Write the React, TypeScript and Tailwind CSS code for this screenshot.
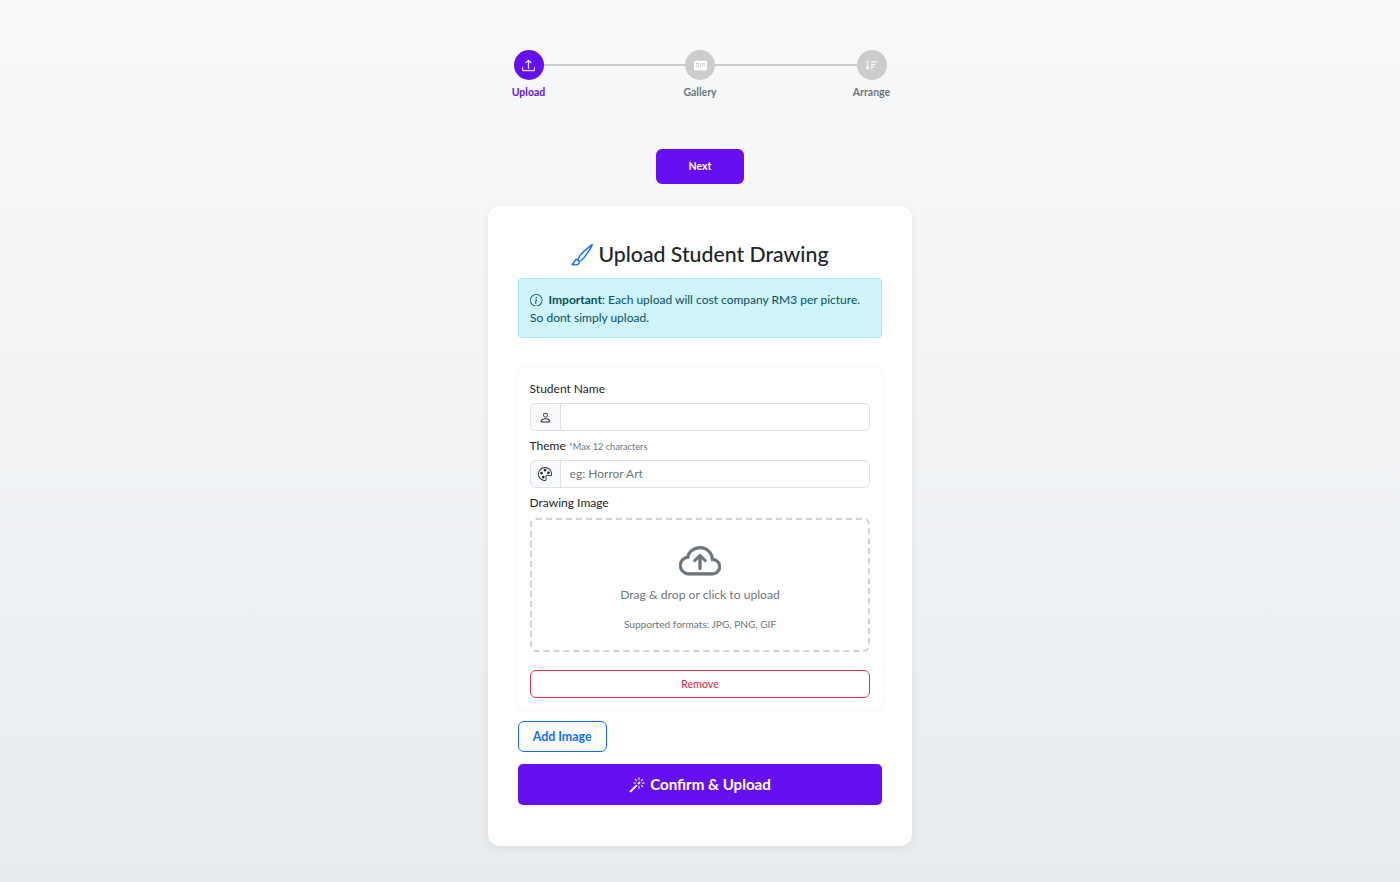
import React from "react";
import { BsUpload, BsPostcardFill, BsSortDown, BsBrush, BsInfoCircle, BsPerson, BsPalette, BsCloudArrowUp, BsMagic } from "react-icons/bs";

function Step({ label, active, children }: { label: string; active?: boolean; children: React.ReactNode }) {
  return (
    <div className="flex w-[60px] flex-col items-center">
      <div className={active ? "z-10 flex h-[30px] w-[30px] items-center justify-center rounded-full bg-[#6610f2] text-[13px] text-white" : "z-10 flex h-[30px] w-[30px] items-center justify-center rounded-full bg-[#cccccc] text-[13px] text-white"}>
        {children}
      </div>
      <div className={active ? "mt-[5px] text-[10.5px] leading-[15px] font-bold whitespace-nowrap text-[#6610f2]" : "mt-[5px] text-[10.5px] leading-[15px] font-bold whitespace-nowrap text-[#6c757d]"}>
        {label}
      </div>
    </div>
  );
}

function Line() {
  return <div className="-mx-[15px] mt-[14px] h-[2px] flex-1 bg-[#cccccc]" />;
}

export default function App() {
  return (
    <div className="flex min-h-[882px] flex-col items-center bg-gradient-to-b from-[#f8f9fa] to-[#e9ecef] pt-[50px] font-['Lato','Liberation_Sans',sans-serif] text-[#212529]">
      <div className="flex w-[403px]">
        <Step label="Upload" active><BsUpload stroke="currentColor" strokeWidth="0.4" /></Step>
        <Line />
        <Step label="Gallery"><BsPostcardFill /></Step>
        <Line />
        <Step label="Arrange"><BsSortDown stroke="currentColor" strokeWidth="0.3" /></Step>
      </div>

      <button className="mt-[49px] h-[35px] w-[88px] rounded-[6px] bg-[#6610f2] pt-[1px] text-[10.5px] font-bold text-white">Next</button>

      <div className="mt-[22px] mb-[36px] w-[424px] rounded-[12px] bg-white p-[29.6px] pt-[34px] shadow-[0_2px_8px_rgba(0,0,0,0.07)]">
        <h2 className="flex h-[29px] items-center justify-center gap-[5px] text-[21.25px] font-medium text-[#212529]">
          <BsBrush className="text-[22px] text-[#0d6efd]" />
          Upload Student Drawing
        </h2>

        <div className="mt-[9px] h-[60px] rounded-[4px] border border-[#9eeaf9] bg-[#cff4fc] px-[11.5px] py-[12px] text-[12px] leading-[18px] text-[#055160]">
          <BsInfoCircle className="mr-[6px] inline align-[-2px] text-[12.5px]" />
          <strong className="font-bold">Important</strong>: Each upload will cost company RM3 per picture. So dont simply upload.
        </div>

        <div className="mt-[29px] rounded-[10px] bg-white px-[12px] pt-[13px] pb-[11px] shadow-[0_0_8px_rgba(0,0,0,0.05)]">
          <label className="block text-[12px] leading-[18px]">Student Name</label>
          <div className="mt-[5px] flex h-[28px] rounded-[5px] border border-[#dee2e6]">
            <span className="flex w-[30px] items-center justify-center rounded-l-[5px] border-r border-[#dee2e6] bg-[#f8f9fa] text-[13px]"><BsPerson /></span>
            <input className="min-w-0 flex-1 px-[9px] text-[12px] outline-none" />
          </div>

          <div className="mt-[6px] text-[12px] leading-[18px]">Theme <span className="text-[9.2px] text-[#6c757d]">*Max 12 characters</span></div>
          <div className="mt-[4px] flex h-[28px] rounded-[5px] border border-[#dee2e6]">
            <span className="flex w-[30px] items-center justify-center rounded-l-[5px] border-r border-[#dee2e6] bg-[#f8f9fa] text-[14px]"><BsPalette /></span>
            <input placeholder="eg: Horror Art" className="min-w-0 flex-1 px-[9px] text-[12px] outline-none placeholder:text-[#6c757d]" />
          </div>

          <label className="mt-[6px] block text-[12px] leading-[18px]">Drawing Image</label>
          <div className="mt-[6px] flex h-[134px] flex-col items-center rounded-[6px] border-2 border-dashed border-[#ced4da] pt-[21px]">
            <BsCloudArrowUp className="text-[42px] leading-none text-[#6c757d]" stroke="currentColor" strokeWidth="0.25" />
            <div className="mt-[3px] text-[12.15px] leading-[18px] text-[#6c757d]">Drag &amp; drop or click to upload</div>
            <div className="mt-[13px] text-[10.1px] leading-[15px] text-[#6c757d]">Supported formats: JPG, PNG, GIF</div>
          </div>

          <button className="mt-[18px] h-[28px] w-full rounded-[6px] border border-[#dc3545] text-[10.7px] font-medium text-[#dc3545]">Remove</button>
        </div>

        <button className="mt-[12px] block h-[31px] w-[89px] rounded-[6px] border border-[#0d6efd] pt-[2px] text-[12.4px] font-bold text-[#0d6efd]">Add Image</button>

        <button className="mt-[12px] flex h-[41px] w-full items-center justify-center gap-[5px] rounded-[5px] bg-[#6610f2] text-[15.1px] font-bold text-white">
          <BsMagic className="text-[16px]" />
          Confirm &amp; Upload
        </button>
        <div className="h-[11px]" />
      </div>
    </div>
  );
}
